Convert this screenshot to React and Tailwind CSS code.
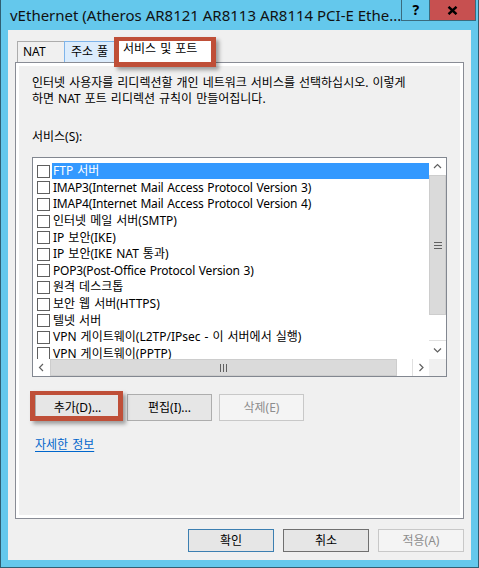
import React from "react";

const items = [
  { t: "FTP 서버" },
  { t: "IMAP3(Internet Mail Access Protocol Version 3)", latin: true },
  { t: "IMAP4(Internet Mail Access Protocol Version 4)", latin: true },
  { t: "인터넷 메일 서버(SMTP)" },
  { t: "IP 보안(IKE)" },
  { t: "IP 보안(IKE NAT 통과)" },
  { t: "POP3(Post-Office Protocol Version 3)", latin: true },
  { t: "원격 데스크톱" },
  { t: "보안 웹 서버(HTTPS)" },
  { t: "텔넷 서버" },
  { t: "VPN 게이트웨이(L2TP/IPsec - 이 서버에서 실행)" },
  { t: "VPN 게이트웨이(PPTP)" },
];

function Chevron({ dir }) {
  const pts = {
    up: "1,5 4.5,1.5 8,5",
    down: "1,1.5 4.5,5 8,1.5",
    left: "5,1 1.5,4.5 5,8",
    right: "1.5,1 5,4.5 1.5,8",
  }[dir];
  const vert = dir === "up" || dir === "down";
  return (
    <svg width={vert ? 9 : 7} height={vert ? 7 : 9} viewBox={vert ? "0 0 9 7" : "0 0 7 9"}>
      <polyline points={pts} fill="none" stroke="#606060" strokeWidth="1.2" />
    </svg>
  );
}

function Button({ children, className = "", disabled }) {
  return (
    <div
      className={
        "flex items-center justify-center border leading-[16px] " +
        (disabled
          ? "bg-[#f4f4f4] border-[#c8c8c8] text-[#8d8d8d] "
          : "bg-[#e6e6e6] border-[#adadad] text-black ") +
        className
      }
    >
      {children}
    </div>
  );
}

export default function App() {
  return (
    <div className="relative w-[479px] h-[568px] bg-[#64c8ec] border-x border-b border-[#2f5f73] flex flex-col font-['Noto_Sans','Noto_Sans_CJK_KR',sans-serif] text-[12px] text-black overflow-hidden">
      {/* Title bar */}
      <div className="h-[30px] flex items-start shrink-0">
        <div className="pl-[9px] pt-[5px] text-[15px] leading-[20px] whitespace-nowrap text-[#111]">
          vEthernet (Atheros AR8121 AR8113 AR8114 PCI-E Ethe...
        </div>
        <div className="flex ml-auto mr-[5px]">
          <div className="w-[28px] h-[21px] border-l border-b border-[#3a6b7e] flex items-center justify-center font-bold text-[14px] leading-none text-black">
            ?
          </div>
          <div className="w-[47px] h-[21px] bg-[#c75050] border-x border-b border-[#3a6b7e] flex items-center justify-center">
            <svg width="11" height="9" viewBox="0 0 11 9">
              <path d="M1.5 0.8 L9.5 8.2 M9.5 0.8 L1.5 8.2" stroke="#000" strokeWidth="2.4" />
            </svg>
          </div>
        </div>
      </div>

      {/* Content */}
      <div className="flex-1 mx-[7px] mb-[7px] bg-[#f0f0f0] flex flex-col pt-[9px] pl-[7px] pr-[7px] [word-spacing:0.9px]">
        {/* Tabs */}
        <div className="flex items-end h-[23px] ml-[2px]">
          <div className="w-[48px] h-[21px] border border-b-0 border-[#acacac] bg-[#f0f0f0] pl-[5px] flex items-center leading-[16px]">
            NAT
          </div>
          <div className="w-[51px] h-[21px] -ml-px border border-b-0 border-[#7eb4ea] bg-[#dcecfc] pl-[6px] flex items-center leading-[16px]">
            주소 풀
          </div>
          <div className="relative z-10 w-[99px] h-[24px] -mb-px border border-b-0 border-[#acacac] bg-white pl-[7px] pt-[1px] leading-[16px] whitespace-nowrap">
            서비스 및 포트
          </div>
        </div>

        {/* Panel */}
        <div className="h-[457px] border border-[#898c95] shadow-[inset_0_0_0_3px_#ffffff] pl-[16px] pt-[12px] flex flex-col">
          <div className="leading-[16px] whitespace-nowrap">
            인터넷 사용자를 리디렉션할 개인 네트워크 서비스를 선택하십시오. 이렇게
            <br />
            하면 NAT 포트 리디렉션 규칙이 만들어집니다.
          </div>
          <div className="mt-[22px] leading-[16px]">서비스(S):</div>

          {/* List box */}
          <div className="mt-[12px] w-[415px] h-[220px] border border-[#828790] bg-white flex flex-col">
            <div className="flex h-[201px]">
              <div className="flex-1 overflow-hidden pt-[5px]">
                {items.map((it, i) => (
                  <div key={i} className="flex items-center h-[16.6px] whitespace-nowrap">
                    <div className="ml-[4px] w-[13px] h-[13px] border border-[#5f5f5f] bg-white shrink-0" />
                    <div
                      className={
                        "ml-[2px] pl-[1px] h-[16px] leading-[16px] " +
                        (it.latin ? "tracking-[-0.2px] " : "") +
                        (i === 0 ? "flex-1 bg-[#3399ff] text-white" : "")
                      }
                    >
                      {it.t}
                    </div>
                  </div>
                ))}
              </div>
              {/* vertical scrollbar */}
              <div className="w-[17px] flex flex-col bg-white">
                <div className="h-[17px] flex items-center justify-center">
                  <Chevron dir="up" />
                </div>
                <div className="h-[140px] bg-[#dadada] border border-[#cdcdcd] flex flex-col items-center justify-center gap-[2px]">
                  <div className="w-[8px] h-px bg-[#606060]" />
                  <div className="w-[8px] h-px bg-[#606060]" />
                  <div className="w-[8px] h-px bg-[#606060]" />
                </div>
                <div className="h-[26px] border-b border-[#e0e0e0]" />
                <div className="flex-1 flex items-center justify-center">
                  <Chevron dir="down" />
                </div>
              </div>
            </div>
            {/* horizontal scrollbar */}
            <div className="flex h-[17px]">
              <div className="w-[396px] flex bg-white">
                <div className="w-[17px] flex items-center justify-center">
                  <Chevron dir="left" />
                </div>
                <div className="w-[347px] bg-[#dadada] border border-[#cdcdcd] flex items-center justify-center gap-[2px]">
                  <div className="w-px h-[8px] bg-[#606060]" />
                  <div className="w-px h-[8px] bg-[#606060]" />
                  <div className="w-px h-[8px] bg-[#606060]" />
                </div>
                <div className="w-[16px] border-r border-[#e0e0e0]" />
                <div className="flex-1 flex items-center justify-center">
                  <Chevron dir="right" />
                </div>
              </div>
              <div className="flex-1 bg-[#f0f0f0]" />
            </div>
          </div>

          {/* Action buttons */}
          <div className="mt-[17px] ml-[3px] flex gap-[7px]">
            <Button className="w-[85px] h-[27px]">추가(D)...</Button>
            <Button className="w-[85px] h-[27px]">편집(I)...</Button>
            <Button className="w-[85px] h-[27px]" disabled>
              삭제(E)
            </Button>
          </div>

          <div className="mt-[16px] ml-[3px] leading-[16px] text-[#0066cc] underline underline-offset-2 self-start">
            자세한 정보
          </div>
        </div>

        {/* Dialog buttons */}
        <div className="mt-[10px] flex justify-end gap-[9px]">
          <Button className="w-[86px] h-[23px] !border-[#3c7fb1]">확인</Button>
          <Button className="w-[86px] h-[23px] !border-[#707070]">취소</Button>
          <Button className="w-[86px] h-[23px]" disabled>
            적용(A)
          </Button>
        </div>
      </div>

      {/* Annotation boxes */}
      <div className="absolute left-[113px] top-[37px] w-[102px] h-[30px] border-[5px] border-t-[4px] border-[#bf4f38] shadow-[3px_3px_4px_rgba(0,0,0,0.35)] z-20" />
      <div className="absolute left-[29px] top-[391px] w-[93px] h-[30px] border-[5px] border-t-[4px] border-[#bf4f38] shadow-[3px_3px_4px_rgba(0,0,0,0.35)] z-20" />
    </div>
  );
}
